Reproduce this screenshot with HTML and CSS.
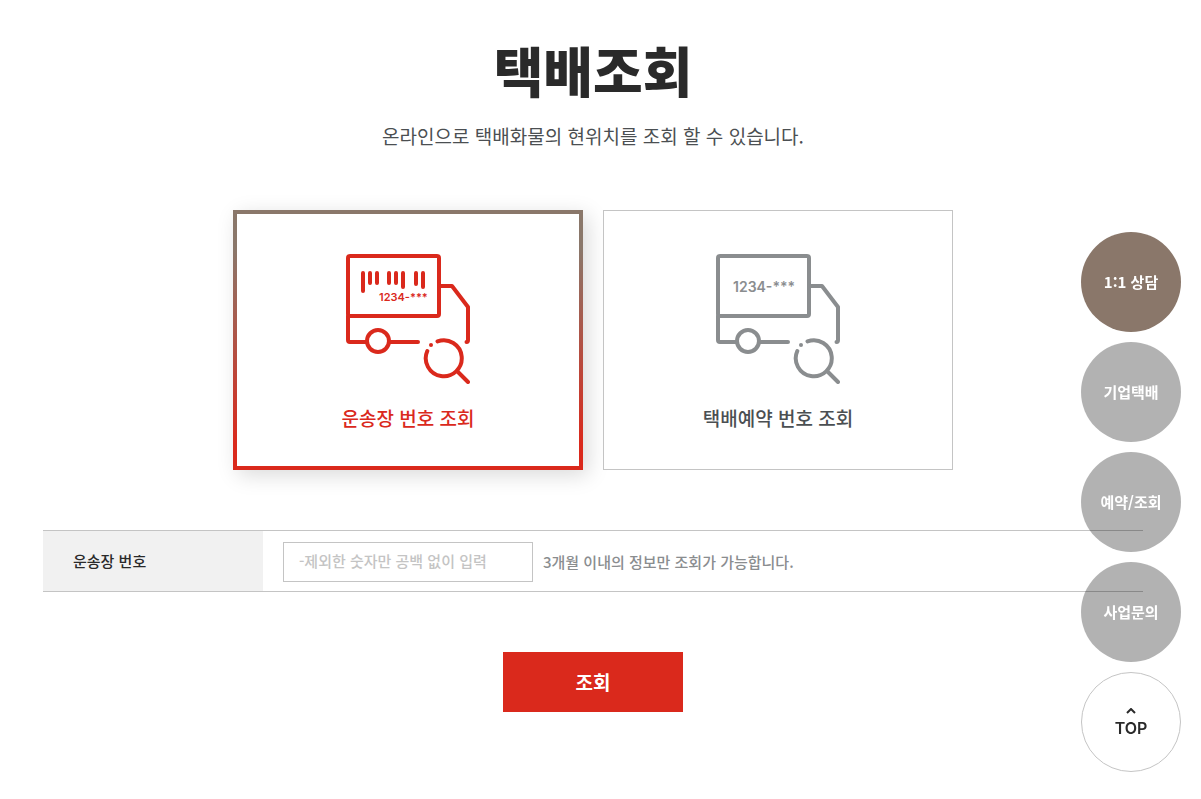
FILE: index.html
```
<!DOCTYPE html>
<html lang="ko">
<head>
    <meta charset="UTF-8">
    <meta name="viewport" content="width=device-width, initial-scale=1.0">
    <title>택배조회</title>
    <link rel="stylesheet" href="styles.css">
</head>
<body>
    <main class="container">
        <h1>택배조회</h1>
        <p class="description">온라인으로 택배화물의 현위치를 조회 할 수 있습니다.</p>

        <div class="tabs">
            <button type="button" class="tab active">
                <svg class="tab-icon" viewBox="0 0 124 130" aria-hidden="true">
                    <g class="lines">
                        <rect x="2" y="2" width="91" height="60" rx="2"/>
                        <path d="M2 62V86Q2 88 4 88H20M44 88H72M95 32H106L122 53V86Q122 88 120.500 88"/>
                        <circle cx="32" cy="87" r="11"/>
                        <path d="M91.500 87.400A18 18 0 1 1 81.300 97M111 117L122 128"/>
                        <path d="M17 19V37M24 19V29M31 19V29M43 19V29M50 19V29M57 19V33M70 19V30M77 19V33"/>
                    </g>
                    <circle class="dot" cx="85" cy="91" r="2"/>
                    <text x="33" y="47" font-size="11">1234-***</text>
                </svg>
                <span>운송장 번호 조회</span>
            </button>
            <button type="button" class="tab">
                <svg class="tab-icon" viewBox="0 0 124 130" aria-hidden="true">
                    <g class="lines">
                        <rect x="2" y="2" width="91" height="60" rx="2"/>
                        <path d="M2 62V86Q2 88 4 88H20M44 88H72M95 32H106L122 53V86Q122 88 120.500 88"/>
                        <circle cx="32" cy="87" r="11"/>
                        <path d="M91.500 87.400A18 18 0 1 1 81.300 97M111 117L122 128"/>
                    </g>
                    <circle class="dot" cx="85" cy="91" r="2"/>
                    <text x="17" y="38" font-size="14">1234-***</text>
                </svg>
                <span>택배예약 번호 조회</span>
            </button>
        </div>

        <form class="search-form">
            <div class="form-row">
                <label for="invoiceNo">운송장 번호</label>
                <div class="field">
                    <input type="text" id="invoiceNo" placeholder="-제외한 숫자만 공백 없이 입력">
                    <span class="hint">3개월 이내의 정보만 조회가 가능합니다.</span>
                </div>
            </div>
            <button type="submit" class="submit">조회</button>
        </form>
    </main>

    <nav class="quick-menu">
        <a href="#" class="active">1:1 상담</a>
        <a href="#">기업택배</a>
        <a href="#">예약/조회</a>
        <a href="#">사업문의</a>
        <a href="#" class="top">
            <svg width="10" height="6" viewBox="0 0 10 6" aria-hidden="true"><path d="M1 5L5 1L9 5"/></svg>
            TOP
        </a>
    </nav>
</body>
</html>
```
FILE: styles.css
```
* {
    box-sizing: border-box;
}

body {
    margin: 0;
    padding: 40px 15px 60px 0;
    font-family: "Noto Sans CJK KR", sans-serif;
    font-size: 15px;
    font-weight: 500;
    color: #2a2a2a;
    background-color: #fff;
}

button,
input {
    font: inherit;
}

.container {
    max-width: 1100px;
    margin: 0 auto;
    text-align: center;
}

h1 {
    margin: 0 0 20px;
    font-size: 54px;
    line-height: 60px;
    font-weight: 900;
}

.description {
    margin: 0 0 58px;
    font-size: 19px;
    line-height: 32px;
    font-weight: 400;
    color: #4b4f52;
}

.tabs {
    display: flex;
    justify-content: center;
    gap: 20px;
    margin-bottom: 60px;
}

.tab {
    display: flex;
    flex-direction: column;
    align-items: center;
    justify-content: center;
    gap: 18px;
    width: 350px;
    height: 260px;
    padding: 8px 0 0;
    border: 1px solid #c4c4c4;
    background-color: #fff;
    color: #4b4f52;
    font-size: 19px;
    line-height: 32px;
    cursor: pointer;
}

.tab.active {
    border: 4px solid;
    border-image: linear-gradient(#8a776a 15%, #da291c 90%) 4;
    box-shadow: 5px 5px 20px rgba(0, 0, 0, 0.15);
    color: #da291c;
}

.tab-icon {
    width: 124px;
    height: 130px;
    color: #8a8d8f;
}

.active .tab-icon {
    color: #da291c;
}

.lines {
    fill: none;
    stroke: currentColor;
    stroke-width: 4;
    stroke-linecap: round;
    stroke-linejoin: round;
}

.dot {
    fill: currentColor;
}

.tab-icon text {
    fill: currentColor;
    font-family: Inter, sans-serif;
    font-weight: 600;
}

.form-row {
    display: flex;
    border-top: 1px solid #c4c4c4;
    border-bottom: 1px solid #c4c4c4;
    text-align: left;
}

.form-row label {
    flex: 0 0 220px;
    padding-left: 30px;
    line-height: 60px;
    background-color: #f1f1f1;
}

.field {
    display: flex;
    align-items: center;
    gap: 10px;
    padding: 11px 20px 9px;
}

.field input {
    width: 250px;
    height: 40px;
    padding: 0 15px 4px;
    border: 1px solid #c4c4c4;
}

.field input::placeholder {
    color: #c4c4c4;
}

.hint {
    padding-bottom: 2px;
    color: #8a8d8f;
}

.submit {
    width: 180px;
    height: 60px;
    margin-top: 60px;
    padding: 0 0 2px;
    border: 0;
    background-color: #da291c;
    color: #fff;
    font-size: 19px;
    font-weight: 700;
    cursor: pointer;
}

/* Floating buttons on the right */
.quick-menu {
    position: fixed;
    right: 20px;
    bottom: 27px;
    display: flex;
    flex-direction: column;
    gap: 10px;
}

.quick-menu a {
    display: flex;
    flex-direction: column;
    align-items: center;
    justify-content: center;
    width: 100px;
    height: 100px;
    padding-bottom: 2px;
    border-radius: 50%;
    background-color: rgba(0, 0, 0, 0.3);
    color: #fff;
    font-weight: 700;
    text-decoration: none;
}

.quick-menu a.active {
    background-color: #8a776a;
}

.quick-menu a.top {
    gap: 4px;
    padding: 2px 0 0;
    border: 1px solid #c4c4c4;
    background-color: #fff;
    color: #2a2a2a;
    font-family: Inter, sans-serif;
    font-size: 16px;
    line-height: 20px;
    font-weight: 600;
}

.top path {
    fill: none;
    stroke: currentColor;
    stroke-width: 2;
}
```
